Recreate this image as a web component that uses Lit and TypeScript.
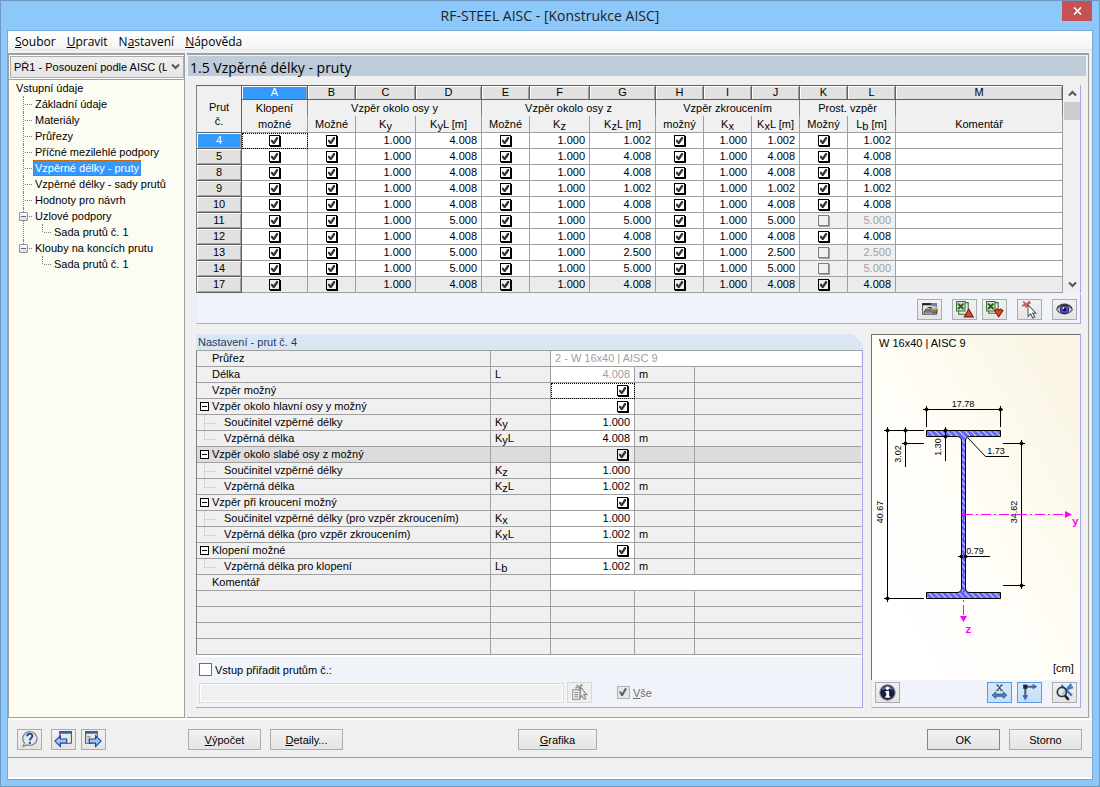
import { LitElement, html, svg, css, nothing, TemplateResult } from "lit";
import { customElement } from "lit/decorators.js";
import { classMap } from "lit/directives/class-map.js";

type Member = {
  no: number;
  kyl: string;
  kzl: string;
  lb: string;
  simple: boolean;
};

const MEMBERS: Member[] = [
  { no: 4, kyl: "4.008", kzl: "1.002", lb: "1.002", simple: true },
  { no: 5, kyl: "4.008", kzl: "4.008", lb: "4.008", simple: true },
  { no: 8, kyl: "4.008", kzl: "4.008", lb: "4.008", simple: true },
  { no: 9, kyl: "4.008", kzl: "1.002", lb: "1.002", simple: true },
  { no: 10, kyl: "4.008", kzl: "4.008", lb: "4.008", simple: true },
  { no: 11, kyl: "5.000", kzl: "5.000", lb: "5.000", simple: false },
  { no: 12, kyl: "4.008", kzl: "4.008", lb: "4.008", simple: true },
  { no: 13, kyl: "5.000", kzl: "2.500", lb: "2.500", simple: false },
  { no: 14, kyl: "5.000", kzl: "5.000", lb: "5.000", simple: false },
  { no: 17, kyl: "4.008", kzl: "4.008", lb: "4.008", simple: true },
];

type Setting = {
  label: string;
  kind?: "group" | "mid" | "last";
  sym?: [string, string, string];
  value?: string;
  check?: boolean;
  unit?: string;
  wide?: boolean;
  muted?: boolean;
  focus?: boolean;
  shaded?: boolean;
};

const SETTINGS: Setting[] = [
  { label: "Průřez", value: "2 - W 16x40 | AISC 9", wide: true, muted: true },
  { label: "Délka", sym: ["L", "", ""], value: "4.008", unit: "m", muted: true },
  { label: "Vzpěr možný", check: true, focus: true },
  { label: "Vzpěr okolo hlavní osy y možný", kind: "group", check: true },
  { label: "Součinitel vzpěrné délky", kind: "mid", sym: ["K", "y", ""], value: "1.000" },
  { label: "Vzpěrná délka", kind: "last", sym: ["K", "y", "L"], value: "4.008", unit: "m" },
  { label: "Vzpěr okolo slabé osy z možný", kind: "group", check: true, shaded: true },
  { label: "Součinitel vzpěrné délky", kind: "mid", sym: ["K", "z", ""], value: "1.000" },
  { label: "Vzpěrná délka", kind: "last", sym: ["K", "z", "L"], value: "1.002", unit: "m" },
  { label: "Vzpěr při kroucení možný", kind: "group", check: true },
  { label: "Součinitel vzpěrné délky (pro vzpěr zkroucením)", kind: "mid", sym: ["K", "x", ""], value: "1.000" },
  { label: "Vzpěrná délka (pro vzpěr zkroucením)", kind: "last", sym: ["K", "x", "L"], value: "1.002", unit: "m" },
  { label: "Klopení možné", kind: "group", check: true },
  { label: "Vzpěrná délka pro klopení", kind: "last", sym: ["L", "b", ""], value: "1.002", unit: "m" },
  { label: "Komentář", value: "", wide: true },
];

const shared = css`
  * {
    box-sizing: border-box;
  }
  button {
    font: inherit;
    color: #000;
    margin: 0;
    padding: 0;
    cursor: default;
  }
  .push {
    height: 21px;
    border: 1px solid #acacac;
    background: linear-gradient(#f2f2f2, #e4e4e4);
    display: flex;
    align-items: center;
    justify-content: center;
  }
  .icon {
    width: 25px;
    flex: none;
  }
  .icon svg {
    display: block;
  }
  .on {
    border-color: #569de5;
    background: linear-gradient(#d6e9fb, #c4dff8);
  }
  .check {
    appearance: none;
    display: block;
    width: 11px;
    height: 11px;
    margin: 0;
    border: 1px solid #000;
    background: #fff;
    box-shadow: 1px 1px 0 #000;
  }
  .check:checked::before {
    content: "";
    display: block;
    width: 7px;
    height: 7px;
    margin: 1px;
    background: #333;
    clip-path: polygon(0 40%, 22% 40%, 36% 62%, 78% 0, 100% 0, 100% 28%, 50% 100%, 28% 100%, 0 66%);
  }
  .check:disabled {
    border-color: #808080;
    background: #f0f0f0;
    box-shadow: 1px 1px 0 #a0a0a0;
  }
`;

const ICONS: Record<string, TemplateResult> = {
  help: svg`<path d="M9 1.500a7 6.500 0 1 1-2.200 12.600L3 15.500l1.200-3.200A6.600 6.600 0 0 1 9 1.500z" fill="#e6e9ee" stroke="#888" stroke-width="1.300"/><path d="M6.700 6c0-3.200 5-3.200 5-.3 0 1.900-2.300 2-2.300 4.300" fill="none" stroke="#234a9c" stroke-width="1.800"/><circle cx="9.300" cy="12.200" r="1.100" fill="#234a9c"/>`,
  prev: svg`<path d="M5.500 9V1.500h11v11H12" fill="#e8e8e8" stroke="#555"/><path d="M5 1h12v2.500H5z" fill="#3a5f9c"/><path d="M.8 10.500 6 5.500v3h6v4H6v3z" fill="#9cc8f4" stroke="#1f3f9c" stroke-width="1.100"/>`,
  next: svg`<path d="M7 12.500H1.500v-11h11V7" fill="#e8e8e8" stroke="#555"/><path d="M1 1h12v2.500H1z" fill="#3a5f9c"/><path d="M3 6.500h3M3 9.500h2" stroke="#888"/><path d="M16.200 10.500 11 5.500v3H5v4h6v3z" fill="#9cc8f4" stroke="#1f3f9c" stroke-width="1.100"/>`,
  view: svg`<path d="M2.500 3.500h13v10h-13z" fill="#eee" stroke="#555"/><path d="M2 3h9v2H2z" fill="#222"/><path d="M11 3h5v3h-5z" fill="#5c88c8"/><path d="M4 11.500c2-4 3-4.500 6-4.500l6 1v4l-5 .5-7 .5z" fill="#777" stroke="#444"/><path d="M11 6.500h5v2.500h-5z" fill="#e8c060"/><path d="M5 8h4M4 12.500h8" stroke="#bbb"/>`,
  excelUp: svg`<path d="M3.500 2.500h9v11h-9z" fill="#e7f1e2" stroke="#3c6a3c"/><path d="M1.500 1.500h8v9h-8z" fill="#cfe4c6" stroke="#3c6a3c"/><path d="m3 3.500 5 5M8 3.500l-5 5" stroke="#225c22" stroke-width="1.800"/><path d="m13 8.500 4.200 7.500H8.800z" fill="#d8482c" stroke="#7c1c10"/>`,
  excelDown: svg`<path d="M3.500 2.500h9v10h-9z" fill="#e7f1e2" stroke="#3c6a3c"/><path d="M1.500 1.500h8v9h-8z" fill="#cfe4c6" stroke="#3c6a3c"/><path d="m3 3.500 5 5M8 3.500l-5 5" stroke="#225c22" stroke-width="1.800"/><path d="M9 10l2.500-1.500L13 10l1.500-1.500L17 10l-4 6z" fill="#d8482c" stroke="#7c1c10"/>`,
  pick: svg`<path d="m3 1.500 6 5M9 1 5 7M2 5.500 10 2.500" stroke="#d05858" stroke-width="1.700"/><path d="m7.500 4.500 7.500 8-3-.2 2 3.700-2 1-1.800-3.800-2.500 2.300z" fill="#fff" stroke="#555"/>`,
  eye: svg`<path d="M1.500 9C5 3.500 13 3.500 16.500 9 13 14.500 5 14.500 1.500 9z" fill="#c8cae8" stroke="#555"/><path d="M2 8C5 2.800 13 2.800 16 8" fill="none" stroke="#444" stroke-width="1.500"/><circle cx="9" cy="9" r="3.900" fill="#5050d0" stroke="#222270"/><circle cx="9" cy="9" r="1.700" fill="#111"/><circle cx="8" cy="7.700" r=".8" fill="#fff"/>`,
  pickOff: svg`<path d="M2.500 6.500h7v9h-7z" fill="#eee" stroke="#999"/><path d="M4 9h4M4 11h4M4 13h4" stroke="#999"/><path d="m6 2 6 4M11 1 8 7M5 5l7-3" stroke="#999" stroke-width="1.500"/><path d="m10 4 6 7h-3l2 3.500-1.500 1L11 12l-1.500 2z" fill="#eee" stroke="#888"/>`,
  info: svg`<circle cx="9" cy="9" r="7.300" fill="#181c40" stroke="#888"/><path d="M3.500 7a5.800 5.800 0 0 1 11 0c-3-2-8-2-11 0z" fill="#6870a8"/><circle cx="9" cy="5" r="1.700" fill="#fff"/><path d="M7 7.500h3.500v5h1V14H6.800v-1.500h1V9H7z" fill="#fff"/>`,
  dims: svg`<path d="m7 2 4 5M11 2 7 7M6 2h2M10 2h2M6 7h2M10 7h2" stroke="#444"/><path d="M2 11.500 5.500 8.500v2h7v-2l3.500 3-3.500 3v-2h-7v2z" fill="#5a80c4" stroke="#2c4c88" stroke-width=".8"/>`,
  axes: svg`<path d="M5 4v9M4 3.500h9" stroke="#55607a" stroke-width="2" fill="none"/><path d="M3 1.500h4v4H3z" fill="#223"/><path d="m12 .8 4.500 2.700L12 6.200zM2.200 11.500h5.600L5 16.500z" fill="#3c68b8"/>`,
  zoom: svg`<path d="m6 2 10 10M15.500 1 7 11M9 6.500 17 4" stroke="#4478cc" stroke-width="2.200"/><circle cx="6.500" cy="8.500" r="4.300" fill="#dde6f0" fill-opacity=".7" stroke="#333" stroke-width="1.600"/><path d="m9.500 12 3.500 4" stroke="#222" stroke-width="2.500"/>`,
};

const icon = (name: string) => html`<svg width="19" height="19" viewBox="0 0 18 18" aria-hidden="true">${ICONS[name]}</svg>`;

const iconButton = (name: string, label: string, extra = "") =>
  html`<button class="push icon ${extra}" aria-label=${label}>${icon(name)}</button>`;

@customElement("nav-tree")
export class NavTree extends LitElement {
  static styles = [
    shared,
    css`
      :host {
        display: block;
        padding: 0 0 0 7px;
        line-height: 16px;
      }
      ul {
        list-style: none;
        margin: 0;
        padding: 0;
      }
      .root {
        padding-left: 7px;
      }
      .item {
        position: relative;
        padding-left: 10px;
      }
      .item::before {
        content: "";
        position: absolute;
        left: 0;
        top: 0;
        height: 100%;
        border-left: 1px dotted #808080;
      }
      .item:last-child::before {
        height: 8px;
      }
      .item::after {
        content: "";
        position: absolute;
        left: 2px;
        top: 8px;
        width: 7px;
        border-top: 1px dotted #808080;
      }
      .sub {
        padding-left: 9px;
      }
      .label {
        color: #000;
        text-decoration: none;
        padding: 0 2px;
        display: inline-block;
        height: 16px;
      }
      .current {
        background: #3399ff;
        color: #fff;
        outline: 1px dotted #c06000;
        outline-offset: -1px;
      }
      .toggle {
        position: absolute;
        z-index: 1;
        left: -4px;
        top: 4px;
        width: 9px;
        height: 9px;
        border: 1px solid #919191;
        border-radius: 1px;
        background: linear-gradient(#fff, #ddd);
        display: flex;
        align-items: center;
        justify-content: center;
      }
      .toggle::before {
        content: "";
        width: 5px;
        height: 1px;
        background: #4868a0;
      }
    `,
  ];

  private leaf(text: string, current = false) {
    return html`<li class="item"><a href="#" class="label ${classMap({ current })}">${text}</a></li>`;
  }

  private branch(text: string) {
    return html`<li class="item">
      <button class="toggle" aria-label="Sbalit ${text}"></button><a href="#" class="label">${text}</a>
      <ul class="sub">${this.leaf("Sada prutů č. 1")}</ul>
    </li>`;
  }

  render() {
    return html`<div>Vstupní údaje</div>
      <ul class="root">
        ${this.leaf("Základní údaje")} ${this.leaf("Materiály")} ${this.leaf("Průřezy")}
        ${this.leaf("Příčné mezilehlé podpory")} ${this.leaf("Vzpěrné délky - pruty", true)}
        ${this.leaf("Vzpěrné délky - sady prutů")} ${this.leaf("Hodnoty pro návrh")}
        ${this.branch("Uzlové podpory")} ${this.branch("Klouby na koncích prutu")}
      </ul>`;
  }
}

@customElement("length-table")
export class LengthTable extends LitElement {
  static styles = [
    shared,
    css`
      :host {
        display: block;
      }
      .frame {
        display: flex;
        border-right: 1px solid #a6a6e8;
      }
      table {
        flex: 1;
        width: 0;
        table-layout: fixed;
        border-collapse: separate;
        border-spacing: 0;
        border-top: 1px solid #606060;
        border-left: 1px solid #808080;
      }
      .c45 { width: 45px; }
      .c48 { width: 48px; }
      .c60 { width: 60px; }
      .c66 { width: 66px; }
      th,
      td {
        padding: 0;
        font-weight: normal;
        height: 16px;
        line-height: 15px;
        border-right: 1px solid #a0a0a0;
        border-bottom: 1px solid #a0a0a0;
        overflow: hidden;
        white-space: nowrap;
      }
      td {
        background: #fff;
      }
      .letter {
        height: 14px;
        line-height: 13px;
        background: #e1e1e1;
        border-color: #606060;
        box-shadow: inset 1px 1px 0 #fff, inset -1px 0 0 #a0a0a0;
      }
      .letter.sel,
      .no.sel {
        background: #3399ff;
        color: #fff;
      }
      .corner {
        line-height: 14px;
        padding-top: 10px;
        border-color: #606060;
      }
      .top {
        border-bottom: 0;
      }
      .bottom {
        height: 17px;
        line-height: 16px;
      }
      .edge {
        border-right-color: #808080;
      }
      .no {
        background: #e1e1e1;
        border-color: #606060;
        box-shadow: inset 1px 1px 0 #fff, inset -1px -1px 0 #a0a0a0;
      }
      .num {
        text-align: right;
        padding-right: 4px;
      }
      .off {
        background: #f0f0f0;
        color: #a0a0a0;
      }
      .last td {
        background: #ebebeb;
      }
      .last .check {
        background: #ebebeb;
      }
      .check {
        margin: 0 auto;
      }
      .focus {
        outline: 1px dotted #000;
        outline-offset: -1px;
      }
      sub {
        font-size: 11px;
        line-height: 0;
        vertical-align: -2px;
      }
      .scroll {
        width: 16px;
        margin-left: 1px;
        background: #f0f0f0;
        display: flex;
        flex-direction: column;
      }
      .arrow {
        border: 0;
        background: none;
        height: 17px;
        display: flex;
        align-items: center;
        justify-content: center;
      }
      .thumb {
        height: 18px;
        background: #cdcdcd;
      }
      .space {
        flex: 1;
      }
      .tools {
        display: flex;
        justify-content: flex-end;
        gap: 10px;
        padding: 5px 3px 3px;
        margin-top: 1px;
        background: #f0f4fa;
        border: 1px solid #a6a6e8;
        border-top: 0;
        border-left-color: #dfe8f6;
      }
      .pair {
        display: flex;
        gap: 5px;
      }
    `,
  ];

  private box(on: boolean, label: string) {
    return html`<input type="checkbox" class="check" aria-label=${label} .checked=${on} ?disabled=${!on} />`;
  }

  private head(k: string, s: string, rest: string) {
    return html`<th class="bottom">${k}<sub>${s}</sub>${rest}</th>`;
  }

  private row(m: Member, i: number) {
    return html`<tr class=${i === MEMBERS.length - 1 ? "last" : ""}>
      <th scope="row" class="no ${i === 0 ? "sel" : ""}">${m.no}</th>
      <td class=${i === 0 ? "focus" : ""}>${this.box(true, "Klopení možné")}</td>
      <td>${this.box(true, "Vzpěr okolo osy y možný")}</td>
      <td class="num">1.000</td>
      <td class="num">${m.kyl}</td>
      <td>${this.box(true, "Vzpěr okolo osy z možný")}</td>
      <td class="num">1.000</td>
      <td class="num">${m.kzl}</td>
      <td>${this.box(true, "Vzpěr zkroucením možný")}</td>
      <td class="num">1.000</td>
      <td class="num">${m.kzl}</td>
      <td class=${m.simple ? "" : "off"}>${this.box(m.simple, "Prostorový vzpěr možný")}</td>
      <td class="num ${m.simple ? "" : "off"}">${m.lb}</td>
      <td></td>
    </tr>`;
  }

  render() {
    return html`<div class="frame">
        <table>
          <colgroup>
            <col class="c45" /><col class="c66" /><col class="c48" /><col class="c60" /><col class="c66" />
            <col class="c48" /><col class="c60" /><col class="c66" /><col class="c48" /><col class="c48" />
            <col class="c48" /><col class="c48" /><col class="c48" /><col />
          </colgroup>
          <thead>
            <tr>
              <th class="corner" rowspan="3">Prut<br />č.</th>
              ${"ABCDEFGHIJKLM".split("").map((l) => html`<th class="letter ${l === "A" ? "sel" : ""}">${l}</th>`)}
            </tr>
            <tr>
              <th class="top edge">Klopení</th>
              <th class="top edge" colspan="3">Vzpěr okolo osy y</th>
              <th class="top edge" colspan="3">Vzpěr okolo osy z</th>
              <th class="top edge" colspan="3">Vzpěr zkroucením</th>
              <th class="top edge" colspan="2">Prost. vzpěr</th>
              <th class="top edge"></th>
            </tr>
            <tr>
              <th class="bottom">možné</th>
              <th class="bottom">Možné</th>
              ${this.head("K", "y", "")} ${this.head("K", "y", "L [m]")}
              <th class="bottom">Možné</th>
              ${this.head("K", "z", "")} ${this.head("K", "z", "L [m]")}
              <th class="bottom">možný</th>
              ${this.head("K", "x", "")} ${this.head("K", "x", "L [m]")}
              <th class="bottom">Možný</th>
              ${this.head("L", "b", " [m]")}
              <th class="bottom">Komentář</th>
            </tr>
          </thead>
          <tbody>
            ${MEMBERS.map((m, i) => this.row(m, i))}
          </tbody>
        </table>
        <div class="scroll">
          <button class="arrow" aria-label="Nahoru">
            <svg width="9" height="7" viewBox="0 0 9 7"><path d="M1 5.500 4.500 2 8 5.500" fill="none" stroke="#555" stroke-width="2" /></svg>
          </button>
          <div class="thumb"></div>
          <div class="space"></div>
          <button class="arrow" aria-label="Dolů">
            <svg width="9" height="7" viewBox="0 0 9 7"><path d="M1 1.500 4.500 5 8 1.500" fill="none" stroke="#555" stroke-width="2" /></svg>
          </button>
        </div>
      </div>
      <div class="tools">
        ${iconButton("view", "Zobrazení")}
        <div class="pair">${iconButton("excelUp", "Export do Excelu")}${iconButton("excelDown", "Import z Excelu")}</div>
        ${iconButton("pick", "Vybrat prut")} ${iconButton("eye", "Náhled")}
      </div>`;
  }
}

@customElement("member-settings")
export class MemberSettings extends LitElement {
  static styles = [
    shared,
    css`
      :host {
        display: flex;
        flex-direction: column;
      }
      h2 {
        margin: 0;
        padding-left: 2px;
        height: 16px;
        line-height: 16px;
        font-size: 11px;
        font-weight: normal;
        color: #1e3c64;
        background: #dae6f4;
        clip-path: polygon(0 0, calc(100% - 10px) 0, 100% 10px, 100% 100%, 0 100%);
      }
      .body {
        flex: 1;
        border-right: 1px solid #a6a6e8;
        border-bottom: 1px solid #a6a6e8;
        display: flex;
        flex-direction: column;
        background: #f0f4fa;
      }
      table {
        width: 100%;
        table-layout: fixed;
        border-collapse: separate;
        border-spacing: 0;
        border-top: 1px solid #a0a0a0;
        border-left: 1px solid #808080;
        background: #f0f0f0;
      }
      .name { width: 294px; }
      .sym { width: 60px; }
      .val { width: 84px; }
      .unit { width: 60px; }
      td,
      th {
        height: 16px;
        line-height: 15px;
        padding: 0 4px;
        text-align: left;
        font-weight: normal;
        border-right: 1px solid #a0a0a0;
        border-bottom: 1px solid #a0a0a0;
        white-space: nowrap;
        overflow: hidden;
      }
      td:last-child {
        border-right-color: #f0f0f0;
      }
      th {
        padding-left: 15px;
        position: relative;
      }
      .child {
        padding-left: 27px;
      }
      .child::before,
      .child::after {
        content: "";
        position: absolute;
        left: 7px;
        top: 0;
        border-left: 1px solid #d4d4d4;
        height: 100%;
      }
      .child.end::before {
        height: 8px;
      }
      .child::after {
        top: 8px;
        height: 0;
        width: 12px;
        border-left: 0;
        border-top: 1px solid #d4d4d4;
      }
      .fold {
        position: absolute;
        left: 3px;
        top: 3px;
        width: 9px;
        height: 9px;
        border: 1px solid #000;
        background: #fff;
        display: flex;
        align-items: center;
        justify-content: center;
      }
      .fold::before {
        content: "";
        width: 5px;
        height: 1px;
        background: #000;
      }
      .input {
        background: #fff;
        text-align: right;
      }
      .input .check {
        margin-left: auto;
        margin-right: 2px;
      }
      .shaded,
      .shaded th,
      .shaded td {
        background: #dcdcdc;
      }
      .shaded .input,
      .shaded .check {
        background: #ebebeb;
      }
      .wide {
        text-align: left;
      }
      .muted {
        color: #a0a0a0;
      }
      .focus {
        outline: 1px dotted #000;
        outline-offset: -1px;
      }
      sub {
        font-size: 11px;
        line-height: 0;
        vertical-align: -2px;
      }
      .assign {
        flex: 1;
        border-top: 2px solid #fff;
        padding: 6px 0 4px 3px;
        display: flex;
        flex-direction: column;
        justify-content: space-between;
      }
      .line {
        display: flex;
        align-items: center;
      }
      label {
        display: flex;
        align-items: center;
        gap: 3px;
      }
      .tick {
        appearance: none;
        width: 13px;
        height: 13px;
        margin: 0;
        border: 1px solid #707070;
        background: #fff;
      }
      .tick:disabled {
        border-color: #adb2b5;
        background: #e6e6e6;
      }
      .tick:checked::before {
        content: "";
        display: block;
        width: 8px;
        height: 8px;
        margin: 1px;
        background: #606060;
        clip-path: polygon(0 45%, 20% 40%, 38% 62%, 76% 0, 100% 8%, 48% 100%, 28% 100%);
      }
      .all {
        color: #6d6d6d;
        margin-left: 25px;
      }
      .list {
        flex: none;
        width: 365px;
        height: 20px;
        border: 1px solid #d9d9d9;
        background: #f0f0f0;
        box-shadow: inset 0 0 0 1px #fff;
        margin-right: 3px;
        font: inherit;
      }
      .dim {
        border-color: #d9d9d9;
        background: #efefef;
      }
    `,
  ];

  private row(s: Setting) {
    const child = s.kind === "mid" || s.kind === "last";
    const cell = classMap({ input: true, wide: !!s.wide, muted: !!s.muted, focus: !!s.focus });
    return html`<tr class=${s.shaded ? "shaded" : ""}>
      <th scope="row" class=${classMap({ child, end: s.kind === "last" })}>
        ${s.kind === "group" ? html`<button class="fold" aria-label="Sbalit"></button>` : nothing}${s.label}
      </th>
      <td>${s.sym ? html`${s.sym[0]}<sub>${s.sym[1]}</sub>${s.sym[2]}` : nothing}</td>
      <td class=${cell} colspan=${s.wide ? 3 : 1}>
        ${s.check ? html`<input type="checkbox" class="check" checked aria-label=${s.label} />` : s.value}
      </td>
      ${s.wide ? nothing : html`<td>${s.unit ?? ""}</td><td></td>`}
    </tr>`;
  }

  render() {
    return html`<h2>Nastavení - prut č. 4</h2>
      <div class="body">
        <table>
          <colgroup>
            <col class="name" /><col class="sym" /><col class="val" /><col class="unit" /><col />
          </colgroup>
          <tbody>
            ${SETTINGS.map((s) => this.row(s))}
            ${[0, 1, 2, 3].map(() => html`<tr><td></td><td></td><td></td><td></td><td></td></tr>`)}
          </tbody>
        </table>
        <div class="assign">
          <div class="line">
            <label><input type="checkbox" class="tick" />Vstup přiřadit prutům č.:</label>
          </div>
          <div class="line">
            <input type="text" class="list" disabled aria-label="Čísla prutů" />
            ${iconButton("pickOff", "Vybrat pruty", "dim")}
            <label class="all"><input type="checkbox" class="tick" checked disabled /><span><u>V</u>še</span></label>
          </div>
        </div>
      </div>`;
  }
}

@customElement("section-view")
export class SectionView extends LitElement {
  static styles = [
    shared,
    css`
      :host {
        display: flex;
        flex-direction: column;
      }
      .canvas {
        flex: 1;
        border-top: 1px solid #707070;
        border-left: 1px solid #707070;
        border-right: 1px solid #a6a6e8;
        background: linear-gradient(60deg, #fff 15%, #fffdf6 50%, #faf5e4 90%);
      }
      .canvas svg {
        display: block;
        width: 100%;
        height: 344px;
      }
      .tools {
        display: flex;
        gap: 10px;
        padding: 2px 3px 3px;
        background: #f0f4fa;
        border: 1px solid #a6a6e8;
        border-top: 0;
        border-left-color: #dfe8f6;
        height: 28px;
      }
      .pair {
        display: flex;
        gap: 5px;
        margin-left: auto;
      }
      .caption {
        font-size: 11px;
      }
      .dim {
        font-size: 9px;
        text-anchor: middle;
      }
      .axis {
        font-family: "Liberation Mono", monospace;
        font-size: 11px;
        font-weight: bold;
        fill: #f0f;
      }
    `,
  ];

  render() {
    const dots = [
      [926, 409], [1000, 409], [887, 430], [905, 430], [905, 443], [887, 598],
      [945, 430], [945, 436], [1021, 443], [1021, 585], [961, 556], [965, 556],
    ];
    return html`<div class="canvas">
        <svg viewBox="872 335 208 344" role="img" aria-label="Průřez W 16x40">
          <defs>
            <pattern id="hatch" width="6" height="6" patternUnits="userSpaceOnUse">
              <path d="M0 0h6v6H0z" fill="#6464ff" />
              <path d="M-1 -1 7 7M-1 5l2 2M5 -1l2 2" stroke="#c8c8ff" stroke-width="1.200" />
            </pattern>
          </defs>
          <text class="caption" x="879" y="347">W 16x40 | AISC 9</text>
          <text class="caption" x="1053" y="672">[cm]</text>
          <path
            d="M926.500 430.500h74v6H970q-4.500 0-4.500 4.500v147q0 4.500 4.500 4.500h30.500v6h-74v-6H957q4.500 0 4.500-4.500V441q0-4.500-4.500-4.500h-30.500z"
            fill="url(#hatch)"
            stroke="#000"
          />
          <g fill="none" stroke="#000">
            <path d="M923 409.500h80M926.500 406v21M1000.500 406v21" />
            <path d="M884 430.500h40M887.500 427v175M884 598.500h40" />
            <path d="M905.500 427v40M902 443.500h22M945.500 427v34" />
            <path d="M968 438l17.500 18.500H1009" />
            <path d="M1003 443.500h22M1021.500 440v149M1003 585.500h22M958 556.500h32" />
          </g>
          ${dots.map(([x, y]) => svg`<path d="M${x + 0.5} ${y - 2}l2.500 2.500-2.500 2.500-2.500-2.500z" />`)}
          <g class="dim">
            <text x="963" y="407">17.78</text>
            <text x="996" y="454">1.73</text>
            <text x="975" y="554">0.79</text>
            <text transform="translate(883 512) rotate(-90)">40.67</text>
            <text transform="translate(901 454) rotate(-90)">3.02</text>
            <text transform="translate(941 447) rotate(-90)">1.30</text>
            <text transform="translate(1017 512) rotate(-90)">34.62</text>
          </g>
          <g stroke="#f0f" stroke-dasharray="10 3 2 3" fill="none">
            <path d="M963 514.500h102M963.500 515v101" />
          </g>
          <path d="M1065 511v7l7-3.500zM960 616h7l-3.500 6z" fill="#f0f" />
          <circle cx="963.500" cy="514.500" r="2" fill="#f0f" />
          <text class="axis" x="1072" y="525">y</text>
          <text class="axis" x="965" y="633">z</text>
        </svg>
      </div>
      <div class="tools">
        ${iconButton("info", "Informace")}
        <div class="pair">${iconButton("dims", "Kóty", "on")}${iconButton("axes", "Osy", "on")}</div>
        ${iconButton("zoom", "Zobrazit vše")}
      </div>`;
  }
}

@customElement("app-root")
export class AppRoot extends LitElement {
  static styles = [
    shared,
    css`
      :host {
        display: flex;
        flex-direction: column;
        box-sizing: border-box;
        min-height: 100vh;
        padding: 0 7px 7px;
        border: 1px solid #6f99c0;
        background: #8cc8fa;
        font-family: "Liberation Sans", Arial, sans-serif;
        font-size: 11px;
        color: #000;
      }
      .title {
        display: grid;
        grid-template-columns: 1fr auto 1fr;
        height: 30px;
        font-family: "Open Sans", "Noto Sans", sans-serif;
      }
      .title h1 {
        grid-column: 2;
        margin: 0;
        font-size: 14px;
        font-weight: normal;
        line-height: 30px;
        color: #222;
      }
      .close {
        justify-self: end;
        width: 30px;
        height: 20px;
        border: 0;
        background: #c75050;
        display: flex;
        align-items: center;
        justify-content: center;
      }
      .client {
        flex: 1;
        display: flex;
        flex-direction: column;
        background: #f0f0f0;
        outline: 1px solid #78a8d4;
      }
      .menu {
        display: flex;
        gap: 11px;
        padding: 0 7px 2px;
        height: 22px;
        background: linear-gradient(#fff, #f4f5f6 18px, #e4e4e4 18px, #e4e4e4 19px, #f0f0f0 19px);
        font-family: "Open Sans", "Noto Sans", sans-serif;
        font-size: 12px;
      }
      .menu button {
        border: 0;
        background: none;
      }
      .work {
        flex: 1;
        display: flex;
        gap: 2px;
        padding-right: 3px;
        border-bottom: 2px solid #fff;
      }
      .side {
        width: 177px;
        flex: none;
        display: flex;
        flex-direction: column;
        border: 1px solid #a0a0a0;
        border-top-width: 2px;
        background: #fcfcf3;
      }
      .case {
        padding: 1px 0 1px 1px;
        background: #fff;
        border-bottom: 1px solid #a0a0a0;
      }
      .pick {
        display: block;
        position: relative;
      }
      select {
        appearance: none;
        display: block;
        width: 100%;
        height: 22px;
        padding: 0 16px 0 3px;
        border: 1px solid #acacac;
        border-radius: 0;
        background: linear-gradient(#f0f0f0, #e5e5e5);
        font: inherit;
        color: #000;
      }
      .pick svg {
        position: absolute;
        right: 4px;
        top: 7px;
      }
      nav-tree {
        flex: 1;
      }
      .main {
        flex: 1;
        min-width: 0;
        display: flex;
        flex-direction: column;
        border: 1px solid #a0a0a0;
        border-left: 0;
        border-top-width: 2px;
        padding: 1px 2px 9px 1px;
      }
      .main h2 {
        margin: 0;
        padding-left: 2px;
        height: 20px;
        line-height: 24px;
        background: #becbd9;
        font-family: "Open Sans", "Noto Sans", sans-serif;
        font-size: 14px;
        font-weight: normal;
      }
      .panels {
        flex: 1;
        display: flex;
        flex-direction: column;
        gap: 10px;
        padding: 9px 5px 0 8px;
      }
      .lower {
        flex: 1;
        display: flex;
        gap: 8px;
      }
      member-settings {
        flex: 1;
        min-width: 0;
      }
      section-view {
        flex: none;
        width: 210px;
      }
      .actions {
        display: flex;
        align-items: center;
        gap: 9px;
        height: 37px;
        padding: 2px 10px 0 9px;
      }
      .nav {
        display: flex;
        gap: 5px;
        margin-right: 73px;
      }
      .wide {
        width: 73px;
      }
      .graph {
        width: 79px;
        margin: 0 auto 0 166px;
      }
      .ok {
        border-color: #3399ff;
      }
      .status {
        height: 22px;
        border-top: 1px solid #a0a0a0;
        border-bottom: 2px solid #fff;
      }
    `,
  ];

  render() {
    return html`<header class="title">
        <h1>RF-STEEL AISC - [Konstrukce AISC]</h1>
        <button class="close" aria-label="Zavřít">
          <svg width="9" height="8" viewBox="0 0 9 8"><path d="m1 .5 7 7M8 .5l-7 7" stroke="#fff" stroke-width="1.700" /></svg>
        </button>
      </header>
      <div class="client">
        <nav class="menu">
          <button><u>S</u>oubor</button><button><u>U</u>pravit</button><button>N<u>a</u>stavení</button
          ><button><u>N</u>ápověda</button>
        </nav>
        <div class="work">
          <aside class="side">
            <div class="case">
              <label class="pick">
                <select aria-label="Zatěžovací případ">
                  <option>PŘ1 - Posouzení podle AISC (LI</option>
                </select>
                <svg width="9" height="7" viewBox="0 0 9 7"><path d="M1 1.500 4.500 5 8 1.500" fill="none" stroke="#555" stroke-width="2" /></svg>
              </label>
            </div>
            <nav-tree></nav-tree>
          </aside>
          <main class="main">
            <h2>1.5 Vzpěrné délky - pruty</h2>
            <div class="panels">
              <length-table></length-table>
              <div class="lower">
                <member-settings></member-settings>
                <section-view></section-view>
              </div>
            </div>
          </main>
        </div>
        <footer class="actions">
          ${iconButton("help", "Nápověda")}
          <div class="nav">${iconButton("prev", "Předchozí")}${iconButton("next", "Další")}</div>
          <button class="push wide"><u>V</u>ýpočet</button>
          <button class="push wide"><u>D</u>etaily...</button>
          <button class="push graph"><u>G</u>rafika</button>
          <button class="push wide ok">OK</button>
          <button class="push wide">Storno</button>
        </footer>
        <div class="status"></div>
      </div>`;
  }
}
